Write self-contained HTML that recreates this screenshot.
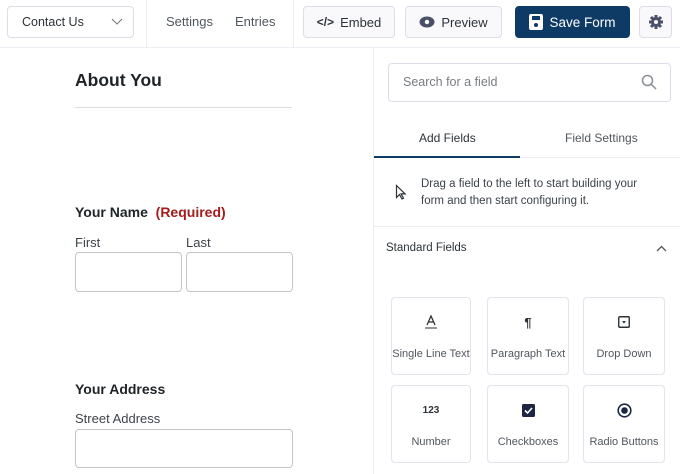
<!DOCTYPE html><html><head><style>
*{box-sizing:border-box;margin:0;padding:0}
body{width:680px;height:474px;overflow:hidden;background:#fff;font-family:"Liberation Sans",sans-serif;color:#1d2327;position:relative}
.a{position:absolute}
.btn{position:absolute;top:6px;height:32px;border:1px solid #dcdde8;border-radius:4px;background:#f9f9fb;font-size:13px;color:#2c3338;display:flex;align-items:center;justify-content:center;gap:6px}
.in{position:absolute;border:1px solid #c3c4c7;border-radius:4px;background:#fff}
.card{position:absolute;width:82px;height:78px;border:1px solid #e2e3ec;border-radius:4px;font-size:11px;color:#50575e;text-align:center}
.card .ic{position:absolute;top:16px;left:0;right:0;height:16px;display:flex;justify-content:center;align-items:center}
.card .t{position:absolute;top:50px;left:0;right:0}
.lb{font-size:13px;color:#3c434a}
</style></head><body>
<div class="a" style="left:0;top:47px;width:680px;height:1px;background:#eceef3"></div>
<div class="a" style="left:146px;top:0;width:1px;height:47px;background:#eceef3"></div>
<div class="a" style="left:293px;top:0;width:1px;height:47px;background:#eceef3"></div>
<div class="a" style="left:373px;top:48px;width:1px;height:426px;background:#eceef3"></div>
<div class="btn" style="left:7px;width:127px;background:#fff;justify-content:space-between;padding:0 10px 0 14px;font-size:12.5px">Contact Us<svg width="12" height="8"><path d="M1 1l5 5 5-5" stroke="#777" fill="none"/></svg></div>
<div class="a" style="left:166px;top:14px;font-size:13px;color:#50575e">Settings</div>
<div class="a" style="left:235px;top:14px;font-size:13px;color:#50575e">Entries</div>
<div class="btn" style="left:303px;width:92px"><span style="font-weight:bold;font-size:12px">&lt;/&gt;</span>Embed</div>
<div class="btn" style="left:405px;width:97px"><svg width="16" height="12"><ellipse cx="8" cy="6" rx="7.5" ry="5.5" fill="#4a5068"/><circle cx="8" cy="6" r="2.2" fill="#fff"/></svg>Preview</div>
<div class="btn" style="left:515px;width:115px;background:#0e3a66;border-color:#0e3a66;color:#fff;font-size:13.5px"><svg width="14" height="16"><rect x="0" y="0" width="14" height="16" rx="2" fill="#fff"/><rect x="3" y="2" width="8" height="4" fill="#0e3a66"/><circle cx="7" cy="11" r="2" fill="#0e3a66"/></svg>Save Form</div>
<div class="btn" style="left:639px;width:33px"><svg width="14" height="14" viewBox="0 0 14 14"><circle cx="7" cy="7" r="5" fill="#4a5068"/><g stroke="#4a5068" stroke-width="3"><path d="M7 0v14M0 7h14M2 2l10 10M12 2L2 12"/></g><circle cx="7" cy="7" r="2" fill="#f9f9fb"/></svg></div>

<div class="a" style="left:75px;top:70px;font-size:17.5px;font-weight:bold;color:#1d2327">About You</div>
<div class="a" style="left:75px;top:107px;width:217px;height:1px;background:#dcdcde"></div>
<div class="a" style="left:75px;top:204px;font-size:14px;font-weight:bold">Your Name &nbsp;<span style="color:#a51c1c">(Required)</span></div>
<div class="a lb" style="left:75px;top:235px">First</div>
<div class="a lb" style="left:186px;top:235px">Last</div>
<div class="in" style="left:75px;top:252px;width:107px;height:40px"></div>
<div class="in" style="left:186px;top:252px;width:107px;height:40px"></div>
<div class="a" style="left:75px;top:381px;font-size:14px;font-weight:bold">Your Address</div>
<div class="a lb" style="left:75px;top:411px">Street Address</div>
<div class="in" style="left:75px;top:429px;width:218px;height:39px"></div>

<div class="in" style="left:388px;top:63px;width:283px;height:39px;border-color:#dcdde8;font-size:12.5px;color:#787c82;padding:11px 14px">Search for a field</div>
<svg class="a" style="left:641px;top:74px" width="16" height="16"><circle cx="6.5" cy="6.5" r="5" stroke="#8c8f94" stroke-width="1.5" fill="none"/><path d="M10 10l5 5" stroke="#8c8f94" stroke-width="1.5"/></svg>
<div class="a" style="left:419px;top:131px;font-size:12px;color:#2c3338">Add Fields</div>
<div class="a" style="left:565px;top:131px;font-size:12px;color:#50575e">Field Settings</div>
<div class="a" style="left:374px;top:157px;width:306px;height:1px;background:#eceef3"></div>
<div class="a" style="left:374px;top:156px;width:146px;height:2px;background:#0e3a66"></div>
<svg class="a" style="left:395px;top:184px" width="12" height="16"><path d="M1.5 1.5v12l3-3 2.5 4.5 1.5-.8-2.4-4.3h4z" fill="none" stroke="#2c3338" stroke-width="1.2"/></svg>
<div class="a" style="left:421px;top:176px;width:240px;font-size:11.5px;line-height:17px;color:#3c434a">Drag a field to the left to start building your form and then start configuring it.</div>
<div class="a" style="left:374px;top:226px;width:306px;height:1px;background:#eceef3"></div>
<div class="a" style="left:386px;top:242px;font-size:11.5px;color:#2c3338">Standard Fields</div>
<svg class="a" style="left:656px;top:245px" width="11" height="7"><path d="M1 6l4.5-4.5L10 6" stroke="#50575e" fill="none" stroke-width="1.3"/></svg>

<div class="card" style="left:391px;top:297px;width:80px"><div class="ic"><svg width="14" height="14"><path d="M3 10L7 1l4 9M4.5 7h5" stroke="#2c3338" fill="none" stroke-width="1.3"/><path d="M1 13h12" stroke="#2c3338"/></svg></div><div class="t">Single Line Text</div></div>
<div class="card" style="left:487px;top:297px"><div class="ic" style="font-weight:bold;font-size:13px;color:#2c3338">¶</div><div class="t">Paragraph Text</div></div>
<div class="card" style="left:583px;top:297px"><div class="ic"><svg width="12" height="12"><rect x=".75" y=".75" width="10.5" height="10.5" rx="1" stroke="#2c3338" stroke-width="1.4" fill="none"/><path d="M4 5h4L6 7.5z" fill="#2c3338"/></svg></div><div class="t">Drop Down</div></div>
<div class="card" style="left:391px;top:385px;width:80px"><div class="ic" style="font-weight:bold;font-size:10px;color:#2c3338">123</div><div class="t">Number</div></div>
<div class="card" style="left:487px;top:385px"><div class="ic"><svg width="13" height="13"><rect width="13" height="13" rx="1.5" fill="#1d2744"/><path d="M3 6.5l2.5 2.5L10 4" stroke="#fff" stroke-width="1.6" fill="none"/></svg></div><div class="t">Checkboxes</div></div>
<div class="card" style="left:583px;top:385px"><div class="ic"><svg width="15" height="15"><circle cx="7.5" cy="7.5" r="6.3" stroke="#1d2744" stroke-width="1.6" fill="none"/><circle cx="7.5" cy="7.5" r="3.3" fill="#1d2744"/></svg></div><div class="t">Radio Buttons</div></div>
</body></html>
